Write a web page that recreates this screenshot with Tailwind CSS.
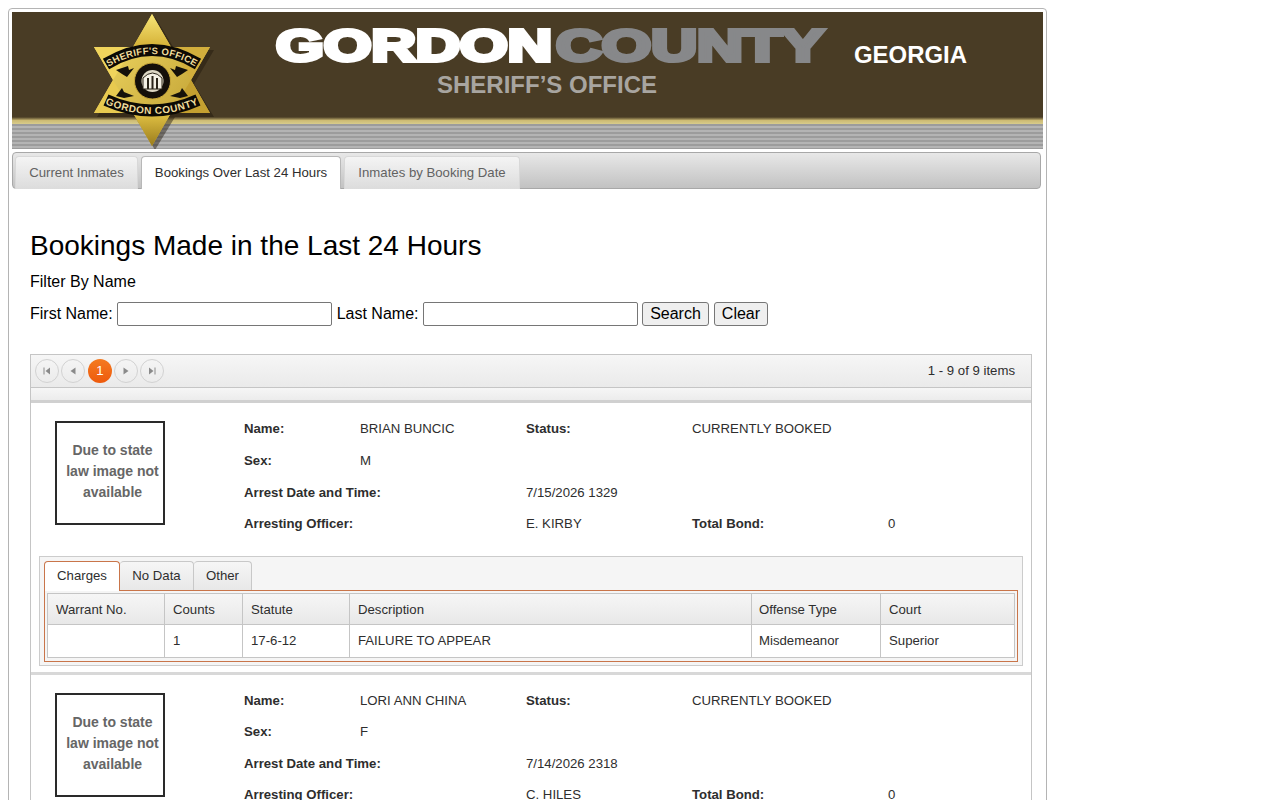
<!DOCTYPE html>
<html lang="en">
<head>
  <meta charset="UTF-8" />
  <meta name="viewport" content="width=device-width, initial-scale=1.0"/>
  <title>Bookings | Gordon County Sheriff's Office</title>
  <script src="https://cdn.jsdelivr.net/npm/@tailwindcss/browser@4"></script>
</head>
<body class="h-[800px] overflow-hidden bg-white text-black [font-family:'Liberation_Sans',Arial,sans-serif]">
  <div class="ml-2 mt-2 h-[900px] w-[1039px] rounded border border-[#b4b4b4] p-[3px]">

    <!-- Banner -->
    <div class="relative h-[137px] w-[1031px] overflow-hidden bg-[#493c25]">
      <div class="absolute inset-x-0 top-[105px] h-[7px] bg-linear-to-b from-[#493c25] via-[#cdbb74] to-[#d8cc8c]"></div>
      <div class="absolute inset-x-0 top-[112px] h-[25px] bg-[repeating-linear-gradient(180deg,#9c9c9c_0px,#9c9c9c_2px,#b4b4b4_2px,#b4b4b4_4px)]"></div>
      <svg class="absolute left-0 top-0" width="1031" height="137" viewBox="12 12 1031 137">
        <defs>
          <linearGradient id="g1" x1="0" y1="0" x2="0" y2="1"><stop offset="0" stop-color="#f8e678"/><stop offset="1" stop-color="#d4b035"/></linearGradient>
          <linearGradient id="g2" x1="0" y1="0" x2="1" y2="1"><stop offset="0" stop-color="#f6e06a"/><stop offset="1" stop-color="#b8962a"/></linearGradient>
          <linearGradient id="g3" x1="0" y1="0" x2="0" y2="1"><stop offset="0" stop-color="#e2c244"/><stop offset="1" stop-color="#9a7c1c"/></linearGradient>
          <path id="arcTop" d="M105 69 Q152 39 199 69" fill="none"/>
          <path id="arcBottom" d="M103 103 Q152 125 201 103" fill="none"/>
        </defs>
        <!-- star -->
        <polygon points="155,17 175,50 214,50 194,84 214,117 175,117 155,150 135,117 97,117 116,84 97,50 135,50" fill="#1e170c" opacity="0.45"/>
        <polygon points="152,14 171,47 210,47 191,80 210,113 171,113 152,146 133,113 94,113 113,80 94,47 133,47" fill="url(#g2)"/>
        <polygon points="152,14 171,47 133,47" fill="url(#g1)"/>
        <polygon points="94,47 133,47 113,80" fill="#f0d45c"/>
        <polygon points="210,47 171,47 191,80" fill="#d2ae3c"/>
        <polygon points="94,113 133,113 113,80" fill="#e8ca50"/>
        <polygon points="210,113 171,113 191,80" fill="#c4a030"/>
        <polygon points="152,146 133,113 171,113" fill="url(#g3)"/>
        <!-- bands -->
        <path d="M106 64 Q152 36 198 64" fill="none" stroke="#0c0a05" stroke-width="12"/>
        <path d="M106 100 Q152 121 198 100" fill="none" stroke="#0c0a05" stroke-width="12"/>
        <text font-size="9.500" font-weight="700" fill="#f0dc9c" letter-spacing="0.3"><textPath href="#arcTop" startOffset="50%" text-anchor="middle">SHERIFF'S OFFICE</textPath></text>
        <text font-size="10" font-weight="700" fill="#f0dc9c" letter-spacing="0.5"><textPath href="#arcBottom" startOffset="50%" text-anchor="middle">GORDON COUNTY</textPath></text>
        <!-- arrows -->
        <polygon points="116,70 128,66 129,70 134,68 127,77 122,74" fill="#15110a"/>
        <polygon points="188,70 176,66 175,70 170,68 177,77 182,74" fill="#15110a"/>
        <polygon points="116,96 122,88 124,92 134,96 124,98" fill="#15110a"/>
        <polygon points="188,96 182,88 180,92 170,96 180,98" fill="#15110a"/>
        <!-- seal -->
        <circle cx="152.500" cy="81" r="18" fill="#14100a" stroke="#c9a83a" stroke-width="1"/>
        <circle cx="152.500" cy="81" r="11" fill="#ddd8c4"/>
        <path d="M143 89 V78 Q152.500 68 162 78 V89 Z" fill="#f4f1e4" stroke="#2a2418" stroke-width="1"/>
        <path d="M148 89 V78 M152.500 89 V76 M157 89 V78" stroke="#2a2418" stroke-width="2"/>
        <!-- wordmark -->
        <text x="276" y="61" font-size="44" font-weight="700" fill="#ffffff" stroke="#ffffff" stroke-width="4" stroke-linejoin="miter" textLength="276" lengthAdjust="spacingAndGlyphs">GORDON</text>
        <text x="556" y="61" font-size="44" font-weight="700" fill="#87888a" stroke="#87888a" stroke-width="4" stroke-linejoin="miter" textLength="268" lengthAdjust="spacingAndGlyphs">COUNTY</text>
        <text x="437" y="93" font-size="24" font-weight="700" fill="#a8a5a0" textLength="220" lengthAdjust="spacingAndGlyphs">SHERIFF’S OFFICE</text>
        <text x="854" y="63" font-size="24" font-weight="700" fill="#ffffff" textLength="113" lengthAdjust="spacingAndGlyphs">GEORGIA</text>
      </svg>
    </div>

    <!-- Main tabs -->
    <div class="mt-[3px] flex h-[37px] w-[1029px] gap-[3px] rounded border border-[#a8a8a8] bg-linear-to-b from-[#e8e8e8] to-[#c2c2c2] pl-[2px] pt-[3px] text-[13.2px]">
      <a class="flex h-[33px] w-[123px] items-center justify-center rounded-t border border-b-0 border-[#d8d8d8] bg-linear-to-b from-[#f4f4f4] to-[#dcdcdc] text-[#626262]">Current Inmates</a>
      <a class="flex h-[33px] w-[200px] items-center justify-center rounded-t border border-b-0 border-[#b8b8b8] bg-white text-[#2e2e2e]">Bookings Over Last 24 Hours</a>
      <a class="flex h-[33px] w-[176px] items-center justify-center rounded-t border border-b-0 border-[#d8d8d8] bg-linear-to-b from-[#f4f4f4] to-[#dcdcdc] text-[#626262]">Inmates by Booking Date</a>
    </div>

    <!-- Page body -->
    <div class="pl-[18px]">
      <h1 class="mt-[39px] text-[28px] leading-[36px]">Bookings Made in the Last 24 Hours</h1>
      <p class="mt-[9px] text-base leading-[18px]">Filter By Name</p>
      <div class="mt-[11px] flex h-[24px] items-center text-base">
        <span>First Name:</span>
        <input type="text" class="ml-1 h-[24px] w-[215px] rounded-[2px] border border-[#767676] bg-white" />
        <span class="ml-[5px]">Last Name:</span>
        <input type="text" class="ml-[5px] h-[24px] w-[215px] rounded-[2px] border border-[#767676] bg-white" />
        <button class="ml-1 h-[24px] w-[67px] rounded-[3px] border border-[#767676] bg-[#efefef] pb-[1px] pr-[1px] leading-[21px]">Search</button>
        <button class="ml-[5px] h-[24px] w-[54px] rounded-[3px] border border-[#767676] bg-[#efefef] pb-[1px] pr-[1px] leading-[21px]">Clear</button>
      </div>

      <!-- Grid -->
      <div class="mt-[28px] w-[1002px] border-x border-t border-[#c5c5c5] text-[13.2px] text-[#2e2e2e]">
        <div class="flex h-[33px] items-center justify-between border-b border-[#c5c5c5] bg-linear-to-b from-[#f6f6f6] to-[#eaeaea] pl-[4px] pr-4">
          <div class="flex gap-[2px]">
            <span class="flex h-6 w-6 items-center justify-center rounded-full border border-[#d2d2d2]"><svg width="8" height="8" viewBox="0 0 8 8"><path d="M1 0.500V7.500" stroke="#8a8a8a"/><path d="M7 0.500V7.500L2.500 4Z" fill="#8a8a8a"/></svg></span>
            <span class="flex h-6 w-6 items-center justify-center rounded-full border border-[#d2d2d2]"><svg width="8" height="8" viewBox="0 0 8 8"><path d="M6.500 0.500V7.500L1.500 4Z" fill="#8a8a8a"/></svg></span>
            <span class="ml-[1px] flex h-6 w-6 items-center justify-center rounded-full bg-linear-to-b from-[#f47a20] to-[#ee5a0c] text-white">1</span>
            <span class="flex h-6 w-6 items-center justify-center rounded-full border border-[#d2d2d2]"><svg width="8" height="8" viewBox="0 0 8 8"><path d="M1.500 0.500V7.500L6.500 4Z" fill="#8a8a8a"/></svg></span>
            <span class="flex h-6 w-6 items-center justify-center rounded-full border border-[#d2d2d2]"><svg width="8" height="8" viewBox="0 0 8 8"><path d="M1 0.500V7.500L5.500 4Z" fill="#8a8a8a"/><path d="M7 0.500V7.500" stroke="#8a8a8a"/></svg></span>
          </div>
          <span>1 - 9 of 9 items</span>
        </div>
        <div class="h-[15px] border-b-[3px] border-[#d0d0d0] bg-linear-to-b from-[#f6f6f6] to-[#ececec]"></div>

        <!-- Booking 1 -->
        <div class="h-[272px] border-b-[3px] border-[#d8d8d8] bg-white pt-[18px]">
          <div class="flex">
            <div class="ml-[24px] flex h-[104px] w-[110px] flex-col items-center justify-center border-2 border-[#2a2a2a] pb-[4px] pl-[5px] text-center text-sm font-bold leading-[21px] text-[#666666]">Due to state<br/>law image not<br/>available</div>
            <div class="-mt-[8px] ml-[79px] grid h-[127px] grid-cols-[116px_166px_166px_196px_1fr] grid-rows-[32px_32px_32px_30px] items-center">
              <b>Name:</b><span>BRIAN BUNCIC</span><b>Status:</b><span class="col-span-2">CURRENTLY BOOKED</span>
              <b>Sex:</b><span class="col-span-4">M</span>
              <b class="col-span-2">Arrest Date and Time:</b><span class="col-span-3">7/15/2026 1329</span>
              <b class="col-span-2">Arresting Officer:</b><span>E. KIRBY</span><b>Total Bond:</b><span>0</span>
            </div>
          </div>
          <div class="relative ml-[8px] mt-[16px] h-[110px] w-[984px] border border-[#cccccc] bg-[#f5f5f5] px-1 pt-1">
            <div class="flex h-[30px]">
              <span class="z-10 flex h-[30px] w-[76px] items-center justify-center rounded-t border border-b-0 border-[#c9754a] bg-white pb-[1px]">Charges</span>
              <span class="flex h-[29px] w-[74px] items-center justify-center rounded-t border border-l-0 border-b-0 border-[#c8c8c8] bg-linear-to-b from-[#f6f6f6] to-[#e8e8e8]">No Data</span>
              <span class="flex h-[29px] w-[58px] items-center justify-center rounded-t border border-l-0 border-b-0 border-[#c8c8c8] bg-linear-to-b from-[#f6f6f6] to-[#e8e8e8]">Other</span>
            </div>
            <div class="-mt-[1px] h-[72px] w-[974px] border border-[#c9754a] bg-[#f5f5f5] p-[2px]">
              <div class="grid h-[65px] grid-cols-[117px_78px_107px_402px_129px_1fr] grid-rows-[31px_1fr] border border-[#c5c5c5] bg-white">
                <span class="flex items-center border-b border-r border-[#c5c5c5] bg-linear-to-b from-[#f6f6f6] to-[#e8e8e8] pl-2 pt-[2px]">Warrant No.</span>
                <span class="flex items-center border-b border-r border-[#c5c5c5] bg-linear-to-b from-[#f6f6f6] to-[#e8e8e8] pl-2 pt-[2px]">Counts</span>
                <span class="flex items-center border-b border-r border-[#c5c5c5] bg-linear-to-b from-[#f6f6f6] to-[#e8e8e8] pl-2 pt-[2px]">Statute</span>
                <span class="flex items-center border-b border-r border-[#c5c5c5] bg-linear-to-b from-[#f6f6f6] to-[#e8e8e8] pl-2 pt-[2px]">Description</span>
                <span class="flex items-center border-b border-r border-[#c5c5c5] bg-linear-to-b from-[#f6f6f6] to-[#e8e8e8] pl-[7px] pt-[2px]">Offense Type</span>
                <span class="flex items-center border-b border-[#c5c5c5] bg-linear-to-b from-[#f6f6f6] to-[#e8e8e8] pl-2 pt-[2px]">Court</span>
                <span class="border-r border-[#c5c5c5]"></span>
                <span class="flex items-center border-r border-[#c5c5c5] pl-2">1</span>
                <span class="flex items-center border-r border-[#c5c5c5] pl-2">17-6-12</span>
                <span class="flex items-center border-r border-[#c5c5c5] pl-2">FAILURE TO APPEAR</span>
                <span class="flex items-center border-r border-[#c5c5c5] pl-[7px]">Misdemeanor</span>
                <span class="flex items-center pl-2">Superior</span>
              </div>
            </div>
          </div>
        </div>

        <!-- Booking 2 -->
        <div class="bg-white pt-[18px]">
          <div class="flex">
            <div class="ml-[24px] flex h-[104px] w-[110px] flex-col items-center justify-center border-2 border-[#2a2a2a] pb-[4px] pl-[5px] text-center text-sm font-bold leading-[21px] text-[#666666]">Due to state<br/>law image not<br/>available</div>
            <div class="-mt-[8px] ml-[79px] grid h-[127px] grid-cols-[116px_166px_166px_196px_1fr] grid-rows-[32px_30px_34px_28px] items-center">
              <b>Name:</b><span>LORI ANN CHINA</span><b>Status:</b><span class="col-span-2">CURRENTLY BOOKED</span>
              <b>Sex:</b><span class="col-span-4">F</span>
              <b class="col-span-2">Arrest Date and Time:</b><span class="col-span-3">7/14/2026 2318</span>
              <b class="col-span-2">Arresting Officer:</b><span>C. HILES</span><b>Total Bond:</b><span>0</span>
            </div>
          </div>
        </div>
      </div>
    </div>
  </div>
</body>
</html>
